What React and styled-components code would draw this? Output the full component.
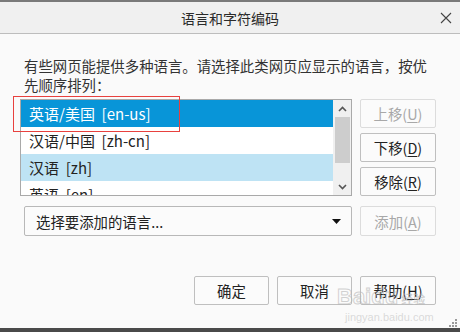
import styled, { createGlobalStyle } from 'styled-components';

const GlobalStyle = createGlobalStyle`
  html, body {
    margin: 0;
    padding: 0;
    background: #fafafa;
  }
  body {
    font-family: "Noto Sans CJK SC", "Noto Sans", "DejaVu Sans", sans-serif;
    color: #222;
  }
`;

const Window = styled.div`
  position: relative;
  width: 460px;
  height: 332px;
  overflow: hidden;
  background: #fafafa;
  border-top: 2px solid #7a7a7a;
  box-sizing: border-box;
  display: flex;
  flex-direction: column;
`;

const TitleBar = styled.div`
  height: 31px;
  flex: none;
  background: #f0f0f0;
  border-bottom: 1px solid #bdbdbd;
  display: flex;
  align-items: center;
  justify-content: center;
  position: relative;
  font-size: 14px;
  color: #2a2a2a;
  letter-spacing: 0;
`;

const CloseButton = styled.div`
  position: absolute;
  right: 8px;
  top: 10px;
  width: 12px;
  height: 12px;
  display: flex;
`;

const Body = styled.div`
  flex: 1;
  padding: 0 24px 0 20px;
  display: flex;
  flex-direction: column;
`;

const Description = styled.p`
  margin: 22px 0 0 4px;
  font-size: 14.4px;
  line-height: 19px;
  color: #333;
`;

const ListRow = styled.div`
  margin-top: 5px;
  display: flex;
  gap: 8px;
`;

const ListBox = styled.div`
  position: relative;
  width: 332px;
  height: 97px;
  box-sizing: border-box;
  border: 1px solid #a9a9a9;
  background: #fff;
  display: flex;
  overflow: hidden;
`;

const Items = styled.div`
  flex: 1;
  display: flex;
  flex-direction: column;
`;

const Item = styled.div`
  height: 27px;
  flex: none;
  box-sizing: border-box;
  padding-left: 8px;
  display: flex;
  align-items: center;
  font-size: 15px;
  white-space: pre;
  color: ${p => (p.$state === 'selected' ? '#fff' : '#222')};
  background: ${p =>
    p.$state === 'selected' ? '#0895d8' : p.$state === 'hover' ? '#bee3f4' : '#fff'};
`;

const Scrollbar = styled.div`
  width: 18px;
  flex: none;
  background: #f0f0f0;
  display: flex;
  flex-direction: column;
  align-items: center;
`;

const Arrow = styled.div`
  height: 17px;
  flex: none;
  display: flex;
  align-items: center;
  justify-content: center;
`;

const Track = styled.div`
  flex: 1;
  width: 100%;
  display: flex;
  flex-direction: column;
  align-items: center;
`;

const Thumb = styled.div`
  width: 15px;
  height: 46px;
  background: #cdcdcd;
`;

const ButtonColumn = styled.div`
  display: flex;
  flex-direction: column;
  gap: 5px;
`;

const Button = styled.div`
  width: ${p => p.$w || 76}px;
  height: ${p => p.$h || 29}px;
  box-sizing: border-box;
  border: 1px solid ${p => (p.$disabled ? '#dcdcdc' : '#bfbfbf')};
  border-radius: 2px;
  background: #fbfbfb;
  display: flex;
  align-items: center;
  justify-content: center;
  font-size: 14.4px;
  color: ${p => (p.$disabled ? '#a8a8a8' : '#222')};

  u {
    text-underline-offset: 2px;
  }
`;

const SelectRow = styled.div`
  margin: 10px 0 0 4px;
  display: flex;
  gap: 8px;
`;

const Select = styled.div`
  width: 328px;
  height: 30px;
  box-sizing: border-box;
  border: 1px solid #b8b8b8;
  border-radius: 2px;
  background: #fbfbfb;
  display: flex;
  align-items: center;
  justify-content: space-between;
  padding: 0 10px 0 11px;
  font-size: 14.4px;
  color: #222;
`;

const Footer = styled.div`
  margin-top: 40px;
  display: flex;
  justify-content: flex-end;
  gap: 8px;
`;

const RedMark = styled.div`
  position: absolute;
  left: 13px;
  top: 94px;
  width: 167px;
  height: 36px;
  box-sizing: border-box;
  border: 1.5px solid #e8413e;
  pointer-events: none;
`;

const BottomEdge = styled.div`
  position: absolute;
  left: 0;
  right: 0;
  bottom: 0;
  height: 4px;
  background: #4a4a4a;
`;

const Grip = styled.div`
  position: absolute;
  right: 3px;
  bottom: 5px;
  display: grid;
  grid-template-columns: repeat(3, 2px);
  gap: 1px;
  span {
    width: 2px;
    height: 2px;
    background: ${p => '#9a9a9a'};
  }
`;

const Watermark = styled.div`
  position: absolute;
  left: 337px;
  top: 284px;
  display: flex;
  flex-direction: column;
  color: rgba(190, 190, 190, 0.55);
  font-family: "Liberation Sans", Arial, sans-serif;
  pointer-events: none;
`;

const WatermarkBrand = styled.div`
  font-size: 22px;
  font-weight: bold;
  line-height: 22px;
  color: transparent;
  -webkit-text-stroke: 1px rgba(180, 180, 180, 0.6);
  span {
    font-size: 12px;
    -webkit-text-stroke: 0;
    color: rgba(180, 180, 180, 0.6);
    font-family: "Noto Sans CJK SC", sans-serif;
    margin-left: 3px;
  }
`;

const WatermarkUrl = styled.div`
  font-size: 11px;
  line-height: 14px;
  margin-left: 8px;
`;

function Chevron({ up }) {
  return (
    <svg width="9" height="6" viewBox="0 0 9 6">
      <path
        d={up ? 'M1 5 L4.5 1.5 L8 5' : 'M1 1 L4.5 4.5 L8 1'}
        fill="none"
        stroke="#555"
        strokeWidth="1.6"
      />
    </svg>
  );
}

const languages = [
  { label: '英语/美国  [en-us]', state: 'selected' },
  { label: '汉语/中国  [zh-cn]', state: 'normal' },
  { label: '汉语  [zh]', state: 'hover' },
  { label: '英语  [en]', state: 'normal' },
];

export default function App() {
  return (
    <>
      <GlobalStyle />
      <Window>
        <TitleBar>
          语言和字符编码
          <CloseButton>
            <svg width="12" height="12" viewBox="0 0 12 12">
              <path d="M1 1 L11 11 M11 1 L1 11" stroke="#444" strokeWidth="1.1" />
            </svg>
          </CloseButton>
        </TitleBar>
        <Body>
          <Description>
            有些网页能提供多种语言。请选择此类网页应显示的语言，按优先顺序排列：
          </Description>
          <ListRow>
            <ListBox>
              <Items>
                {languages.map(l => (
                  <Item key={l.label} $state={l.state}>
                    {l.label}
                  </Item>
                ))}
              </Items>
              <Scrollbar>
                <Arrow>
                  <Chevron up />
                </Arrow>
                <Track>
                  <Thumb />
                </Track>
                <Arrow>
                  <Chevron />
                </Arrow>
              </Scrollbar>
            </ListBox>
            <ButtonColumn>
              <Button $disabled>
                上移(<u>U</u>)
              </Button>
              <Button>
                下移(<u>D</u>)
              </Button>
              <Button>
                移除(<u>R</u>)
              </Button>
            </ButtonColumn>
          </ListRow>
          <SelectRow>
            <Select>
              选择要添加的语言...
              <svg width="9" height="5" viewBox="0 0 9 5">
                <path d="M0 0 L9 0 L4.5 5 Z" fill="#111" />
              </svg>
            </Select>
            <Button $disabled $h={30}>
              添加(<u>A</u>)
            </Button>
          </SelectRow>
          <Footer>
            <Button $w={75}>确定</Button>
            <Button $w={75}>取消</Button>
            <Button>
              帮助(<u>H</u>)
            </Button>
          </Footer>
        </Body>
        <RedMark />
        <Watermark>
          <WatermarkBrand>
            Baidu<span>经验</span>
          </WatermarkBrand>
          <WatermarkUrl>jingyan.baidu.com</WatermarkUrl>
        </Watermark>
        <Grip>
          {Array.from({ length: 9 }).map((_, i) => (
            <span key={i} style={{ visibility: [0, 1, 3].includes(i) ? 'hidden' : 'visible' }} />
          ))}
        </Grip>
        <BottomEdge />
      </Window>
    </>
  );
}
